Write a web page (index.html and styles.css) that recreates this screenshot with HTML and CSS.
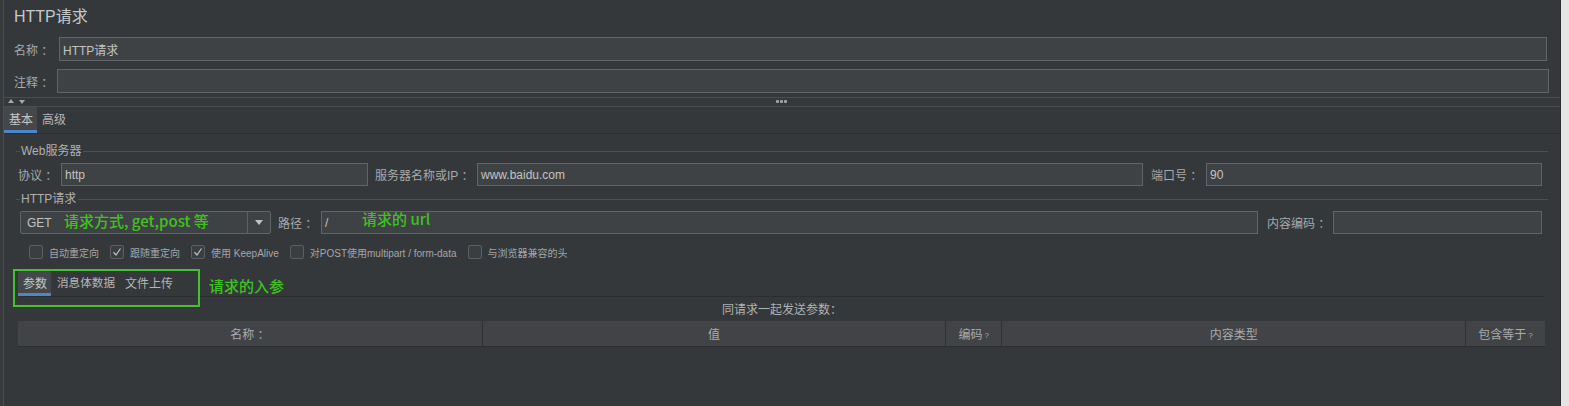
FILE: index.html
```html
<!DOCTYPE html>
<html lang="zh">
<head>
<meta charset="utf-8">
<title>HTTP请求</title>
<link rel="stylesheet" href="styles.css">
</head>
<body>
<div class="page">
  <div class="edge-left"></div>
  <div class="main">
    <div class="title">HTTP请求</div>
    <div class="row row-name">
      <span class="lbl w45">名称 ：</span>
      <div class="field grow">HTTP请求</div>
    </div>
    <div class="row row-comment">
      <span class="lbl w43">注释 ：</span>
      <div class="field grow"></div>
    </div>
    <div class="splitter">
      <span class="arrows"><span class="tri-up"></span><span class="tri-down"></span></span>
      <span class="dots"><i></i><i></i><i></i></span>
    </div>
    <div class="tabbar">
      <span class="tab active">基本</span>
      <span class="tab">高级</span>
    </div>

    <div class="fieldset">
      <div class="fs-head"><span class="tick"></span><span class="fs-label">Web服务器</span><span class="fs-line"></span></div>
      <div class="fs-row">
        <span class="lbl w43">协议 ：</span>
        <div class="field w307">http</div>
        <span class="lbl gap7 w102">服务器名称或IP ：</span>
        <div class="field grow">www.baidu.com</div>
        <span class="lbl gap8 w55">端口号 ：</span>
        <div class="field w336">90</div>
      </div>
      <div class="fs-head second"><span class="tick"></span><span class="fs-label">HTTP请求</span><span class="fs-line"></span></div>
      <div class="fs-row">
        <div class="combo">
          <span class="combo-text">GET</span>
          <span class="combo-btn"><span class="tri-down big"></span></span>
        </div>
        <span class="lbl gap7 w43">路径 ：</span>
        <div class="field grow">/</div>
        <span class="lbl gap9 w66">内容编码 ：</span>
        <div class="field w209"></div>
      </div>
      <div class="checks">
        <label class="chk"><span class="box"></span>自动重定向</label>
        <label class="chk"><span class="box on"><svg viewBox="0 0 14 14" width="14" height="14"><path d="M3.5 7.2 L6 10 L10.5 3.5" fill="none" stroke="#b9bbbd" stroke-width="1.3"/></svg></span>跟随重定向</label>
        <label class="chk"><span class="box on"><svg viewBox="0 0 14 14" width="14" height="14"><path d="M3.5 7.2 L6 10 L10.5 3.5" fill="none" stroke="#b9bbbd" stroke-width="1.3"/></svg></span>使用 KeepAlive</label>
        <label class="chk"><span class="box"></span>对POST使用multipart / form-data</label>
        <label class="chk"><span class="box"></span>与浏览器兼容的头</label>
      </div>
    </div>

    <div class="subtabs">
      <span class="stab active">参数</span>
      <span class="stab s2">消息体数据</span>
      <span class="stab s3">文件上传</span>
    </div>
    <div class="caption">同请求一起发送参数：</div>
    <div class="table-head">
      <span class="th">名称 ：</span>
      <span class="th">值</span>
      <span class="th">编码<small>?</small></span>
      <span class="th">内容类型</span>
      <span class="th">包含等于<small>?</small></span>
    </div>
  </div>
  <div class="edge-right"></div>

  <div class="note note-method">请求方式, get,post 等</div>
  <div class="note note-url">请求的 url</div>
  <div class="note note-params">请求的入参</div>
  <div class="note-box"></div>
</div>
</body>
</html>
```
FILE: styles.css
```css
* { box-sizing: border-box; }
html, body { margin: 0; padding: 0; }
body {
  background: #35383b;
  font-family: "Liberation Sans", "Noto Sans CJK SC", sans-serif;
  color: #a9abad;
}
.page {
  position: relative;
  display: flex;
  width: 1569px;
  height: 406px;
  overflow: hidden;
  background: #35383b;
}
.edge-left {
  width: 4px;
  flex: none;
  background: #383b3e;
  border-right: 1px solid #4b4e51;
}
.edge-right {
  width: 9px;
  flex: none;
  background: #e4e4e4;
  border-left: 1px solid #2a2c2e;
}
.main {
  flex: 1;
  display: flex;
  flex-direction: column;
  min-width: 0;
}
.title {
  height: 37px;
  padding: 7px 0 0 10px;
  font-size: 16px;
  line-height: 20px;
  color: #c6c8ca;
}
.row {
  display: flex;
  align-items: center;
  height: 24px;
  padding-left: 10px;
}
.row-name { margin-right: 13px; margin-bottom: 8px; }
.row-comment { margin-right: 11px; }
.lbl {
  flex: none;
  font-size: 12px;
  color: #a7a9ab;
  white-space: nowrap;
}
.w43 { width: 43px; }
.w45 { width: 45px; }
.w55 { width: 55px; }
.w66 { width: 66px; }
.w102 { width: 102px; }
.gap7 { margin-left: 7px; }
.gap8 { margin-left: 8px; }
.gap9 { margin-left: 9px; }
.field {
  height: 100%;
  background: #3f4244;
  border: 1px solid #626567;
  font-size: 12px;
  color: #c2c4c6;
  display: flex;
  align-items: center;
  padding-left: 3px;
  white-space: nowrap;
}
.grow { flex: 1; min-width: 0; }
.w307 { flex: none; width: 307px; }
.w336 { flex: none; width: 336px; }
.w209 { flex: none; width: 209px; }

.splitter {
  margin-top: 4px;
  height: 10px;
  border-top: 1px solid #4a4d50;
  border-bottom: 1px solid #4a4d50;
  position: relative;
}
.arrows {
  position: absolute;
  left: 4px;
  top: 1px;
  display: flex;
  gap: 5px;
}
.tri-up {
  width: 0; height: 0;
  border-left: 3.5px solid transparent;
  border-right: 3.5px solid transparent;
  border-bottom: 4px solid #a6a8aa;
}
.tri-down {
  width: 0; height: 0;
  border-left: 3.5px solid transparent;
  border-right: 3.5px solid transparent;
  border-top: 4px solid #a6a8aa;
  margin-top: 1px;
}
.dots {
  position: absolute;
  left: 772px;
  top: 2px;
  display: flex;
  gap: 1px;
}
.dots i {
  display: block;
  width: 3px;
  height: 3px;
  background: #a0a2a4;
  border-radius: 1px;
}
.tabbar {
  display: flex;
  align-items: stretch;
  height: 27px;
  border-bottom: 1px solid #2c2e30;
}
.tab {
  font-size: 12px;
  color: #b4b6b8;
  padding: 0 4px 0 5px;
  display: flex;
  align-items: center;
  border-bottom: 3px solid transparent;
}
.tab.active {
  background: #45484b;
  border-bottom-color: #4b87c6;
  color: #c4c6c8;
}

.fieldset {
  margin: 10px 12px 0 12px;
}
.fs-head {
  display: flex;
  align-items: center;
  height: 14px;
}
.fs-head.second { margin-top: 6px; }
.tick {
  width: 4px;
  height: 1px;
  background: #4d5053;
}
.fs-label {
  font-size: 12px;
  color: #aeb0b2;
  padding: 0 2px 0 1px;
  line-height: 14px;
}
.fs-line {
  flex: 1;
  height: 1px;
  background: #4d5053;
}
.fs-row {
  display: flex;
  align-items: center;
  height: 23px;
  margin-top: 5px;
  padding: 0 6px 0 2px;
}
.combo {
  flex: none;
  width: 251px;
  height: 100%;
  margin-left: 2px;
  display: flex;
  background: #3f4244;
  border: 1px solid #626567;
  border-radius: 2px;
}
.combo-text {
  flex: 1;
  font-size: 12px;
  color: #c2c4c6;
  display: flex;
  align-items: center;
  padding-left: 6px;
}
.combo-btn {
  width: 23px;
  border-left: 1px solid #5e6163;
  display: flex;
  align-items: center;
  justify-content: center;
}
.tri-down.big {
  border-left-width: 4.5px;
  border-right-width: 4.5px;
  border-top-width: 5px;
  border-top-color: #bfc1c3;
  margin: 0;
}
.checks {
  display: flex;
  align-items: center;
  height: 14px;
  margin-top: 11px;
  padding-left: 2px;
}
.chk {
  display: flex;
  align-items: center;
  font-size: 10px;
  color: #a4a6a8;
  margin-left: 11px;
  white-space: nowrap;
}
.box {
  width: 14px;
  height: 14px;
  border: 1px solid #5c5f61;
  border-radius: 2px;
  background: #3b3e40;
  margin-right: 6px;
  position: relative;
  flex: none;
}
.box svg { position: absolute; left: -1px; top: -1px; }

.subtabs {
  display: flex;
  margin: 12px 15px 0 14px;
  height: 26px;
  border-bottom: 1px solid #2c2e30;
}
.stab {
  font-size: 12px;
  color: #b4b6b8;
  display: flex;
  align-items: center;
  border-bottom: 3px solid transparent;
  white-space: nowrap;
}
.stab.s2 { margin-left: 6px; font-size: 11.6px; }
.stab.s3 { margin-left: 10px; }
.stab.active {
  background: #45484b;
  border-bottom-color: #4b87c6;
  color: #c6c8ca;
  padding: 0 4px 0 5px;
}
.caption {
  margin-top: 6px;
  height: 14px;
  text-align: center;
  font-size: 12px;
  line-height: 14px;
  color: #b0b2b4;
}
.table-head {
  margin: 4px 15px 0 14px;
  height: 26px;
  display: grid;
  grid-template-columns: 1fr 1fr 56px 1fr 80px;
  background: #414346;
  border-bottom: 1px solid #2c2e30;
}
.th {
  font-size: 12px;
  color: #a9abad;
  display: flex;
  align-items: center;
  justify-content: center;
  border-left: 1px solid #2f3133;
  white-space: nowrap;
}
.th:first-child { border-left: none; }
.th small { font-size: 8px; margin-left: 2px; margin-top: 3px; }

.note {
  position: absolute;
  color: #3fc21e;
  font-size: 15px;
  font-weight: 500;
  font-family: "Noto Sans CJK SC", "Liberation Sans", sans-serif;
  line-height: 18px;
  white-space: nowrap;
}
.note-method { left: 64px; top: 212px; }
.note-url { left: 362px; top: 210px; }
.note-params { left: 209px; top: 277px; }
.note-box {
  position: absolute;
  left: 13px;
  top: 269px;
  width: 187px;
  height: 38px;
  border: 2px solid #46c12a;
}
```
